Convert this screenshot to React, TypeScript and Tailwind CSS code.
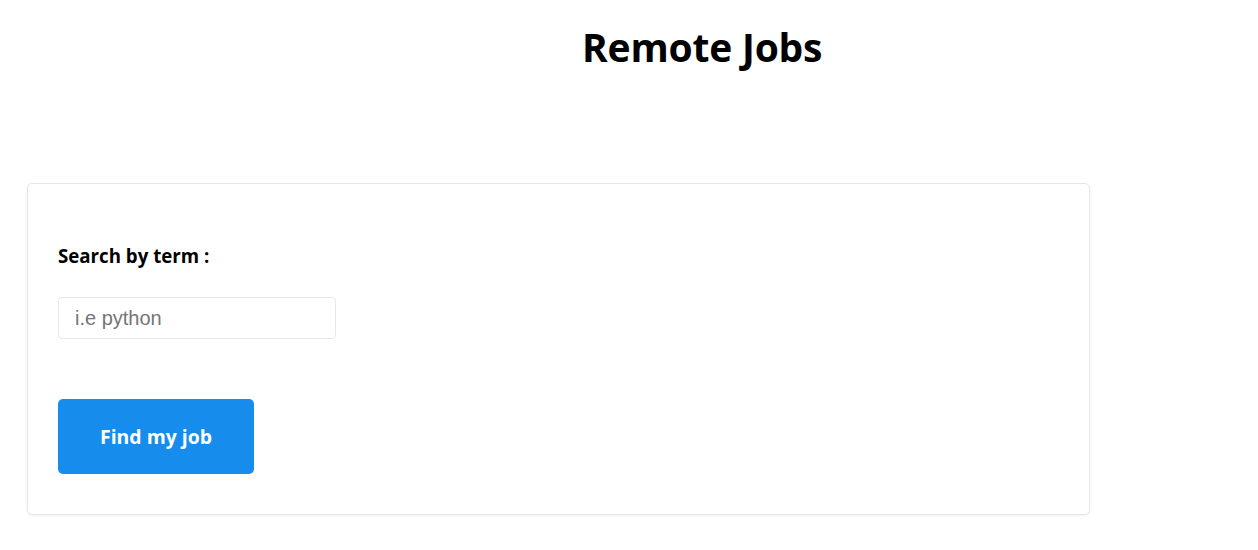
import React from "react";

export default function App() {
  return (
    <div className="min-h-[550px] bg-white" style={{ fontFamily: '"Open Sans", "Noto Sans", sans-serif' }}>
      <div className="pt-[21px] pl-[582px]">
        <h1 className="text-[39px] font-bold leading-[52px] text-black tracking-[-0.2px]">Remote Jobs</h1>
      </div>
      <div className="ml-[27px] mt-[110px] w-[1063px] h-[332px] rounded-[5px] border border-[#e6e6e6] shadow-[0_1px_3px_rgba(0,0,0,0.06)] px-[30px] pt-[58px]">
        <label className="block text-[18.7px] font-bold leading-[28px] text-black">Search by term :</label>
        <input
          type="text"
          placeholder="i.e python"
          className="mt-[27px] block w-[278px] h-[42px] rounded-[4px] border border-[#e8e8e8] px-[16px] text-[20px] text-black placeholder:text-[#757575] outline-none"
          style={{ fontFamily: '"Liberation Sans", Arial, sans-serif' }}
        />
        <button className="mt-[60px] block w-[196px] h-[75px] rounded-[5px] bg-[#168ded] text-white text-[19.4px] font-bold">
          Find my job
        </button>
      </div>
    </div>
  );
}
